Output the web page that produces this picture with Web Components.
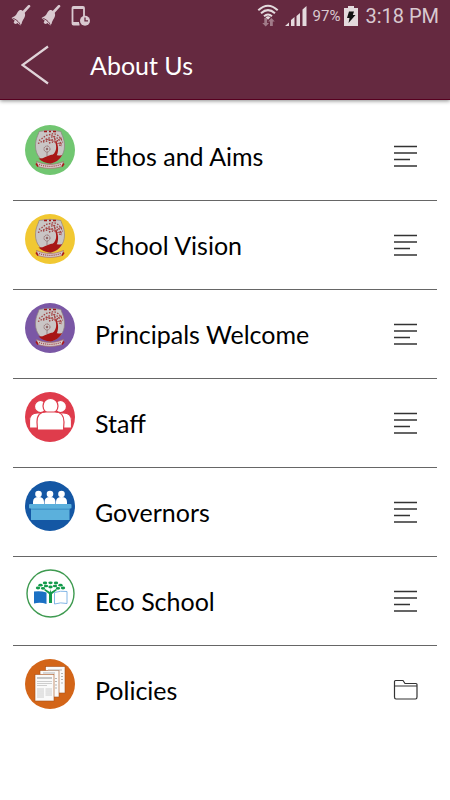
<!DOCTYPE html>
<html lang="en">
<head>
<meta charset="utf-8">
<meta name="viewport" content="width=device-width, initial-scale=1">
<title>About Us</title>
<style>
  body {
    margin: 0;
    background: #fff;
    color: #000;
    font-family: Lato, sans-serif;
  }
</style>
</head>
<body>
<app-screen>
  <status-bar slot="top" battery="97%" time="3:18 PM"></status-bar>
  <title-bar slot="top">About Us</title-bar>
  <menu-row><crest-badge slot="badge" style="--badge: #71c671"></crest-badge>Ethos and Aims</menu-row>
  <menu-row><crest-badge slot="badge" style="--badge: #f1c832"></crest-badge>School Vision</menu-row>
  <menu-row><crest-badge slot="badge" style="--badge: #7a57a5"></crest-badge>Principals Welcome</menu-row>
  <menu-row><picture-badge slot="badge" name="staff"></picture-badge>Staff</menu-row>
  <menu-row><picture-badge slot="badge" name="governors"></picture-badge>Governors</menu-row>
  <menu-row><picture-badge slot="badge" name="eco"></picture-badge>Eco School</menu-row>
  <menu-row kind="folder"><picture-badge slot="badge" name="policies"></picture-badge>Policies</menu-row>
</app-screen>

<script>
class BaseElement extends HTMLElement {
  constructor() {
    super();
    this.attachShadow({mode: 'open'});
  }
  connectedCallback() {
    const template = document.createElement('template');
    template.innerHTML = this.getStyles() + this.getTemplate();
    this.shadowRoot.replaceChildren(template.content.cloneNode(true));
  }
}

class AppScreen extends BaseElement {
  getTemplate() {
    return `
      <header><slot name="top"></slot></header>
      <main><slot></slot></main>
    `;
  }
  getStyles() {
    return `
      <style>
        :host {
          display: block;
        }
        header {
          background: #652940;
          border-bottom: 1px solid #560020;
          box-shadow: 0 1px 4px rgba(0, 0, 0, .45);
        }
        main {
          padding: 12px 13px;
        }
      </style>
    `;
  }
}

class StatusBar extends BaseElement {
  getTemplate() {
    const bell = `
      <svg width="20" height="22" viewBox="0 0 20 22" fill="#d9c9d0">
        <path d="M18 1.2 12.6 7" stroke="#d9c9d0" stroke-width="2.6" stroke-linecap="round"/>
        <path d="M8.500 5.200c2.600-.6 6 2 5.600 5-.5 3.500-2.800 4.500-3.400 8.300L9.300 20.600.5 12.900l2-1.200c3.400-1 3.300-4.800 6-6.500Z"/>
        <path d="M1.800 13.600c1.800-.4 6.800 3.600 7.300 6.200" stroke="#652940" stroke-width="1" fill="none"/>
        <circle cx="4.600" cy="17.200" r="1.700"/>
      </svg>`;
    return `
      <div class="group left">
        ${bell}
        ${bell}
        <svg width="20" height="22" viewBox="0 0 20 22" fill="none" stroke="#d9c9d0">
          <path d="M8.500 19.500H2.500q-1 0-1-1V3q0-1 1-1H12q1 0 1 1v8" stroke-width="1.800"/>
          <path d="M1.500 3h11.500M1.500 18H8" stroke-width="2"/>
          <circle cx="14" cy="15.700" r="5" fill="#d9c9d0" stroke="none"/>
          <path d="M14 12.500v3.400h3" stroke="#652940" stroke-width="1.300"/>
        </svg>
      </div>
      <div class="group">
        <svg width="22" height="24" viewBox="0 0 22 24" fill="none" stroke="#e4dadd" stroke-width="2">
          <path d="M1.300 6.300Q11-2.800 20.700 6.300M4 9.300q7-6.300 14 0M7 12.300q4-3.600 8 0"/>
          <path d="m8.500 13.200 2.500 2.600 2.500-2.600q-2.500-2-5 0Z" fill="#e4dadd" stroke="none"/>
          <g fill="#a17b89" stroke="none">
            <path d="M7.300 14h2.800v5h2L8.700 22.500 5.300 19h2Z"/>
            <path d="M13 22h2.800v-4.500h2l-3.400-3.500-3.400 3.500h2Z"/>
          </g>
        </svg>
        <svg class="signal" width="22" height="20" viewBox="0 0 22 20" fill="#e4dadd">
          <path d="M0 20l4-3.500V20ZM6 20v-6l3.500-3V20ZM11.500 20v-10l3.500-3v13ZM17.500 20V3.500L21.500 0v20Z"/>
        </svg>
        <span class="battery">${this.getAttribute('battery')}</span>
        <svg width="14" height="20" viewBox="0 0 14 20">
          <path d="M0 2h4V0h6v2h4v18H0Z" fill="#e4dadd"/>
          <path d="M5 5.500h5L8.800 9h2.700L4.500 17l1-5H3Z" fill="#111"/>
        </svg>
        <span class="time">${this.getAttribute('time')}</span>
      </div>
    `;
  }
  getStyles() {
    return `
      <style>
        :host {
          display: flex;
          justify-content: space-between;
          height: 31px;
          padding: 0 11px;
          color: #d9c9d0;
          font-family: Roboto, sans-serif;
        }
        .group {
          display: flex;
          align-items: center;
        }
        .left {
          gap: 10px;
        }
        .signal {
          margin: 0 6px;
        }
        .battery {
          font-size: 15px;
          margin-right: 4px;
        }
        .time {
          font-size: 20px;
          margin-left: 7px;
        }
      </style>
    `;
  }
}

class TitleBar extends BaseElement {
  getTemplate() {
    return `
      <button type="button" aria-label="Back">
        <svg width="28" height="40" viewBox="0 0 28 40" fill="none" stroke="#e0d4d9" stroke-width="2.200">
          <path d="M27 1.500 1.500 20 27 38.500"/>
        </svg>
      </button>
      <h1><slot></slot></h1>
    `;
  }
  getStyles() {
    return `
      <style>
        :host {
          display: flex;
          align-items: center;
          gap: 41px;
          height: 68px;
          padding: 0 21px;
          color: #fff;
        }
        button {
          display: flex;
          padding: 0;
          border: 0;
          background: none;
        }
        h1 {
          margin: 0;
          font-size: 25px;
          font-weight: 400;
          line-height: 32px;
        }
      </style>
    `;
  }
}

class MenuRow extends BaseElement {
  getTemplate() {
    const list = '<path d="M1 3.500h23M1 10h23M1 16.500h16M1 23h23" stroke-width="1.300"/>';
    const folder = '<path d="M1.500 20V4.500q0-1 1-1H10l2 3h11q1 0 1 1V20q0 2-1.500 2H3Q1.500 22 1.500 20ZM1.500 9h22.500" stroke-width="1.200"/>';
    return `
      <a href="#">
        <slot name="badge"></slot>
        <span><slot></slot></span>
        <svg width="25" height="26" viewBox="0 0 25 26" fill="none" stroke="#333">
          ${this.getAttribute('kind') === 'folder' ? folder : list}
        </svg>
      </a>
    `;
  }
  getStyles() {
    return `
      <style>
        :host {
          display: block;
          border-bottom: 1px solid #666;
        }
        :host(:last-of-type) {
          border-bottom: 0;
        }
        a {
          display: flex;
          align-items: center;
          height: 88px;
          padding: 0 19px 0 12px;
          color: inherit;
          text-decoration: none;
        }
        ::slotted([slot="badge"]) {
          align-self: flex-start;
          margin: 13px 20px 0 0;
        }
        span {
          flex: 1;
          font-size: 25px;
          line-height: 32px;
        }
      </style>
    `;
  }
}

// school crest on a coloured disc, the disc colour comes from --badge
class CrestBadge extends BaseElement {
  getTemplate() {
    return `
      <svg width="50" height="50" viewBox="0 0 50 50" fill="none">
        <circle cx="25" cy="25" r="25" fill="var(--badge)"/>
        <path d="M14 6.500Q25 4 36 6.500C36.500 10 39.500 13 39.500 21c0 9-5.500 15.500-14.500 17.500C16 36.500 10.500 30 10.500 21 10.500 13 13.500 10 14 6.500Z" fill="#c9c5c5" stroke="#8f8080" stroke-width=".7"/>
        <path d="M19 6.500h3M24 6.500h2M28 6.500h3" stroke="#a11717" stroke-width="1.300"/>
        <path d="M13.500 33.500c5 .5 8-2.500 12-3.500 4-1 6.500 1.500 11.500 0-2 4-6 7.500-11.500 8.500-5-.5-9-2-12-5Z" fill="#a81616"/>
        <path d="M26 31c5-3 6.500-8 4-14.500l1.300-.5c3 7 1.700 12 .2 15Z" fill="#a81616"/>
        <path d="M30.500 18c-2-3-6-3-10-4M30 17c0-4-1-6-4-7M31 18c1-3 3-4 6-5M31 19c2-1 4-1 6 0" stroke="#a83030" stroke-width=".8"/>
        <path d="M14 15.500l3-2 4-3 4-1 4-1 4 2 3 3 1.500 4M13 18.500l4-2 4-2 4-2 4-1 4 2 2 3 1 4M18 17l4-1 4-1 4-1 4 3M24 18l4-1M34 20l3 1" stroke="#a04040" stroke-width="1.300" stroke-dasharray="1.500 1.400"/>
        <circle cx="22" cy="24" r="3" stroke="#916868" stroke-width="1" stroke-dasharray="1.200 .5"/>
        <circle cx="22" cy="24" r="1.200" fill="#916868"/>
        <path d="M22 27v4" stroke="#8e6f6f" stroke-width=".8"/>
        <path d="M11.500 36.500c9 4 18 4 27 0L37 41.500c-8 2.500-16 2.500-24 0Z" fill="#d6cccc" stroke="#a36b6b" stroke-width=".7"/>
        <path d="M14 39.400c7 2.600 15 2.600 22 0" stroke="#a55" stroke-width="1.300" stroke-dasharray="1.200 .9"/>
        <path d="M11 38.500l2 3M39 38.500l-2 3" stroke="#ab1616" stroke-width="1.500"/>
      </svg>
    `;
  }
  getStyles() {
    return '<style>:host { display: block; height: 50px; }</style>';
  }
}

const pictures = {
  staff: `
    <circle cx="25" cy="25" r="25" fill="#df3c4c"/>
    <g fill="#fff" stroke="#df3c4c" stroke-width="1.200">
      <circle cx="15.500" cy="14.500" r="6"/>
      <circle cx="35.500" cy="14.500" r="6"/>
      <path d="M4.500 36v-7q0-8 8-8H20v15ZM46.500 36v-7q0-8-8-8H31v15Z"/>
      <circle cx="25.500" cy="14" r="7.500"/>
      <path d="M12.500 38 12 30q0-10 9-10h9q9 0 9 10L38.500 38Z"/>
    </g>`,
  governors: `
    <circle cx="25" cy="25" r="25" fill="#1457a4"/>
    <g fill="#fff">
      <circle cx="13.500" cy="13" r="3.300"/>
      <circle cx="25" cy="13" r="3.300"/>
      <circle cx="36.500" cy="13" r="3.300"/>
      <path d="M8 24v-3q0-5 5.500-5t5.500 5v3ZM19.500 24v-3q0-5 5.500-5t5.500 5v3ZM31 24v-3q0-5 5.500-5t5.500 5v3Z"/>
    </g>
    <rect x="6" y="27" width="38.500" height="12" fill="#5bb0dc"/>
    <path d="M6 28h38.500" stroke="#3b8fc6" stroke-width="1.500"/>
    <rect x="4" y="23" width="42.500" height="4.500" rx="1" fill="#5bb0dc"/>`,
  eco: `
    <circle cx="25.500" cy="23.500" r="23.500" fill="#fff" stroke="#3e9a50" stroke-width="1.400"/>
    <path d="M9 21.500q6.500-1 12.500 1V34q-6-2-12.500-.5Z" fill="#1b70c4"/>
    <path d="M42 21.500q-6.500-1-12.500 1V34q6-2 12.500-.5Z" fill="#fff" stroke="#76afe3" stroke-width=".9"/>
    <path d="M24 33V24l-5-4 1-1 5 3 .500-3 .500 3 5-3 1 1-5 4v9Z" fill="#139a4a"/>
    <g fill="#139a4a">
      <ellipse cx="13" cy="18" rx="2.200" ry="1.400"/><ellipse cx="15.500" cy="15.200" rx="2.200" ry="1.400"/>
      <ellipse cx="18" cy="18.300" rx="2.200" ry="1.400"/><ellipse cx="20" cy="13" rx="2.200" ry="1.400"/>
      <ellipse cx="21" cy="16" rx="2.200" ry="1.300"/><ellipse cx="25.500" cy="12.800" rx="2.200" ry="1.400"/>
      <ellipse cx="25.500" cy="17" rx="2.200" ry="1.400"/><ellipse cx="31" cy="13" rx="2.200" ry="1.400"/>
      <ellipse cx="30" cy="16" rx="2.200" ry="1.300"/><ellipse cx="33" cy="18.300" rx="2.200" ry="1.400"/>
      <ellipse cx="35.500" cy="15.200" rx="2.200" ry="1.400"/><ellipse cx="38" cy="18" rx="2.200" ry="1.400"/>
    </g>`,
  policies: `
    <circle cx="25" cy="25" r="25" fill="#d36518"/>
    <g stroke="#a9501a" stroke-width=".6" fill="#fafafa">
      <rect x="20.500" y="7.500" width="19.500" height="26.500"/>
      <rect x="15" y="11.500" width="19" height="26.500"/>
      <rect x="10" y="15.500" width="19" height="26.500"/>
    </g>
    <path d="M23 11h14M36 14.500h2M36 17.500h2M36 20.500h2M36 24h2M30 19.500h2M30 22.500h2M30 26h2M30 29h2M18 14h12" stroke="#b5b5b5"/>
    <path d="M12 19h15" stroke="#aaa" stroke-width="1.300"/>
    <path d="M12 22.500h15M12 24.500h15M12 26.500h10M12 30h7M12 32h7M12 34h7M12 36h7M12 38h7M20.500 30h6.500M20.500 32h6.500M20.500 34h6.500M20.500 36h6.500" stroke="#c8c8c8" stroke-width=".9"/>`
};

class PictureBadge extends BaseElement {
  getTemplate() {
    return `<svg width="50" height="50" viewBox="0 0 50 50" overflow="visible">${pictures[this.getAttribute('name')]}</svg>`;
  }
  getStyles() {
    return '<style>:host { display: block; height: 50px; }</style>';
  }
}

customElements.define('crest-badge', CrestBadge);
customElements.define('picture-badge', PictureBadge);
customElements.define('menu-row', MenuRow);
customElements.define('status-bar', StatusBar);
customElements.define('title-bar', TitleBar);
customElements.define('app-screen', AppScreen);
</script>
</body>
</html>
